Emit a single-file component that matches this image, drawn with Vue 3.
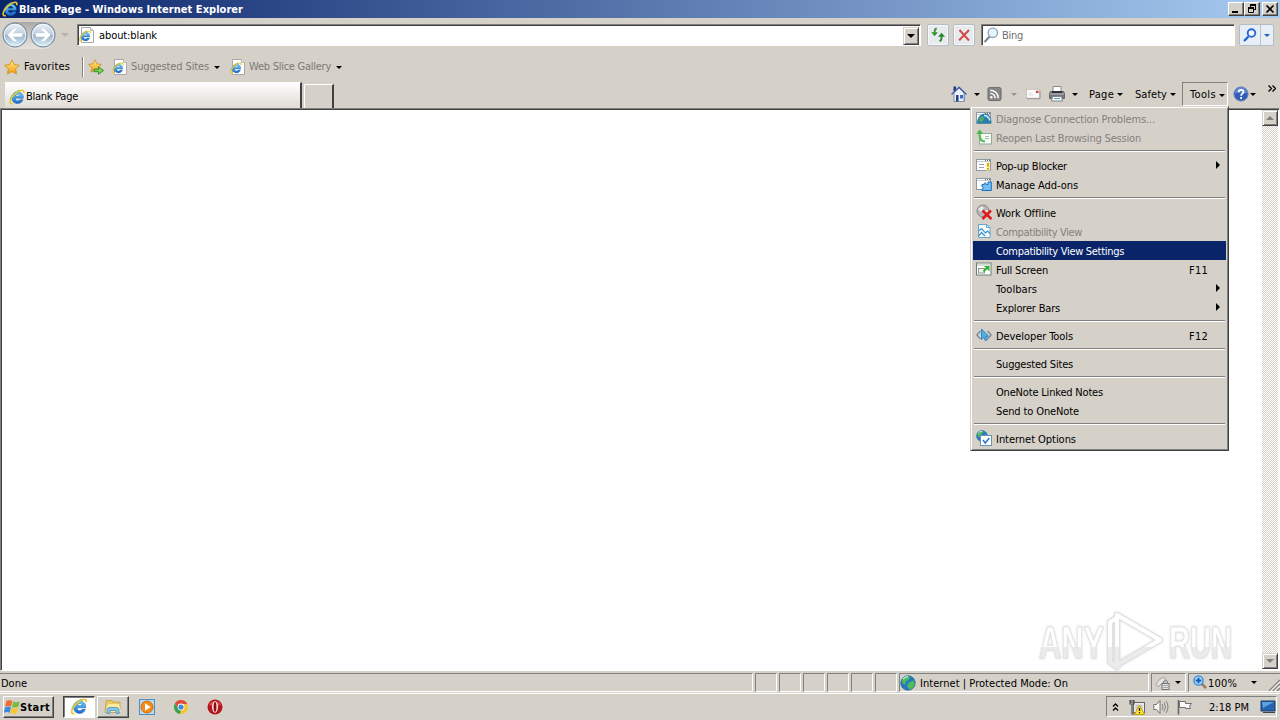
<script setup>
import { ref } from 'vue'

const active = ref('Compatibility View Settings')

const menu = [
  { label: 'Diagnose Connection Problems...', icon: 'diagnose', disabled: true, w: 159 },
  { label: 'Reopen Last Browsing Session', icon: 'reopen', disabled: true, w: 145 },
  { sep: true },
  { label: 'Pop-up Blocker', icon: 'popup', sub: true, w: 71 },
  { label: 'Manage Add-ons', icon: 'addons', w: 82 },
  { sep: true },
  { label: 'Work Offline', icon: 'offline', w: 60 },
  { label: 'Compatibility View', icon: 'compat', disabled: true, w: 86 },
  { label: 'Compatibility View Settings', w: 128 },
  { label: 'Full Screen', icon: 'full', key: 'F11', w: 52 },
  { label: 'Toolbars', sub: true, w: 41 },
  { label: 'Explorer Bars', sub: true, w: 64 },
  { sep: true },
  { label: 'Developer Tools', icon: 'dev', key: 'F12', w: 77 },
  { sep: true },
  { label: 'Suggested Sites', w: 77 },
  { sep: true },
  { label: 'OneNote Linked Notes', w: 107 },
  { label: 'Send to OneNote', w: 83 },
  { sep: true },
  { label: 'Internet Options', icon: 'options', w: 80 },
]

// spreads a label over a fixed width, whatever font is found
const vFit = {
  mounted(el, { value }) {
    const n = el.textContent.length
    const w = el.getBoundingClientRect().width
    el.style.letterSpacing = `${(value - w) / n}px`
  },
}
</script>

<template>
  <svg class="defs" width="0" height="0">
    <defs>
      <linearGradient id="gBlue" x1="0" y1="0" x2="0" y2="1">
        <stop offset="0" stop-color="#6ed2fb" /><stop offset="1" stop-color="#1a66c8" />
      </linearGradient>
      <linearGradient id="gNav" x1="0" y1="0" x2="0" y2="1">
        <stop offset="0" stop-color="#eef3f8" /><stop offset=".48" stop-color="#bccbdc" />
        <stop offset=".52" stop-color="#9fb4cb" /><stop offset="1" stop-color="#dcf4fc" />
      </linearGradient>
      <linearGradient id="gStar" x1="0" y1="0" x2="0" y2="1">
        <stop offset="0" stop-color="#fff08a" /><stop offset="1" stop-color="#f49a10" />
      </linearGradient>
      <linearGradient id="gMark" x1="0" y1="0" x2="0" y2="1">
        <stop offset=".58" stop-color="#fff" /><stop offset=".6" stop-color="#ebebeb" />
      </linearGradient>
      <symbol id="ie" viewBox="0 0 16 16">
        <path d="M14.300 9.200H6.200c.1 1.900 1.100 2.700 2.500 2.700 1 0 1.700-.4 2.100-1.200h3.200c-.8 2.500-2.700 3.800-5.400 3.800-3.500 0-5.600-2.100-5.600-5.500 0-3.500 2.300-5.900 5.800-5.900 3.700 0 5.700 2.300 5.500 6.100zM6.300 7.200h4.700C10.800 5.800 10 5.200 8.700 5.200S6.600 5.800 6.300 7.200z" fill="url(#gBlue)" stroke="#1762b4" stroke-width=".5" />
        <path d="M14.600 4.300c.6-1.700.2-3-1.500-3C9.500 1.300 3.900 5.600 1.900 10.300c-1.400 3.200-.8 5.200 1.900 4.200" fill="none" stroke="#f2c72d" stroke-width="1.600" />
        <path d="M11 1.300C6.500 1.700 2.600 5.700 1.100 10.500" fill="none" stroke="#63b98a" stroke-width=".8" />
      </symbol>
      <symbol id="iepage" viewBox="0 0 16 16">
        <path d="M2.500.5h9l3 3v12h-12z" fill="#fff" stroke="#a8a8a8" />
        <path d="M11.500.5v3h3" fill="#eee" stroke="#b5b5b5" />
        <use href="#ie" x="0" y="3" width="12" height="12" />
      </symbol>
      <symbol id="star" viewBox="0 0 16 16">
        <path d="M8 .8l2.200 4.700 5.200.7-3.800 3.600.9 5.200L8 12.500 3.500 15l.9-5.200L.6 6.200l5.200-.7z" fill="url(#gStar)" stroke="#c98a1a" stroke-width=".8" />
      </symbol>
      <symbol id="staradd" viewBox="0 0 16 16">
        <use href="#star" x="0" y="0" width="14" height="14" />
        <path d="M6 10.300h4.500V7.900L15.500 11.500l-5 3.700V12.700H6z" fill="#7ed65a" stroke="#248522" stroke-width=".9" />
      </symbol>
      <symbol id="arrow" viewBox="0 0 26 26">
        <circle cx="13" cy="13" r="11.900" fill="url(#gNav)" stroke="#7f8fa3" stroke-width="1.200" />
        <circle cx="13" cy="13" r="10.700" fill="none" stroke="#eef5fb" />
        <path d="M5.500 13l6.300-6.300h3.400l-4.500 4.600h9.500v3.400h-9.500l4.500 4.600h-3.400z" fill="#fff" />
      </symbol>
      <symbol id="refresh" viewBox="0 0 16 16">
        <path d="M1.200 5.200h6.800L4.600 9.200z" fill="#3b9436" /><path d="M4.700 6V4q0-2 2-2.500" fill="none" stroke="#3b9436" stroke-width="1.900" />
        <path d="M8 9.800h7L11.500 5.700z" fill="#2b832d" /><path d="M11.500 9v2.500q0 2-2 2.700" fill="none" stroke="#2b832d" stroke-width="1.900" />
      </symbol>
      <symbol id="stop" viewBox="0 0 16 16">
        <path d="M3.500 3l9.500 10.500M13 3L3.200 13.300" stroke="#cf4a4a" stroke-width="2" fill="none" />
      </symbol>
      <symbol id="lens" viewBox="0 0 16 16">
        <path d="M7 9.300L1.500 15" stroke="#78858f" stroke-width="2" />
        <circle cx="9.800" cy="5.800" r="4.700" fill="#e9f5fd" stroke="#8ea2b2" stroke-width="1.300" />
      </symbol>
      <symbol id="lensblue" viewBox="0 0 16 16">
        <path d="M6.500 9.500L2 14" stroke="#1c5fd0" stroke-width="2.200" />
        <circle cx="9.500" cy="6" r="3.800" fill="#f2f8ff" stroke="#2468d8" stroke-width="1.900" />
      </symbol>
      <symbol id="home" viewBox="0 0 16 16">
        <path d="M3 7l5-5 5 5v8.500H3z" fill="#eef1fa" stroke="#6d7da8" stroke-width=".8" />
        <path d="M2.500.5h2.500v4.500H2.500z" fill="#27357f" />
        <path d="M.5 8.500L8 1.300l7.500 7.200" fill="none" stroke="#4660ac" stroke-width="1.500" />
        <path d="M5 9h2.500v6.500H5z" fill="#243c88" /><path d="M9 9h3v3.500H9z" fill="#3b6cc0" />
        <path d="M13.500 8.500v7" stroke="#8290c0" />
      </symbol>
      <symbol id="rss" viewBox="0 0 16 16">
        <rect x="1" y="1" width="14" height="14" rx="2" fill="#858585" stroke="#6b6b6b" />
        <circle cx="4.600" cy="11.500" r="1.300" fill="#fff" />
        <path d="M3.500 7.300a5 5 0 0 1 5.200 5.300M3.500 4a8.500 8.500 0 0 1 8.600 8.600" fill="none" stroke="#fff" stroke-width="1.500" />
      </symbol>
      <symbol id="mail" viewBox="0 0 16 12">
        <rect x=".5" y="1" width="14" height="9.500" fill="#fafafa" stroke="#c4bebc" />
        <path d="M1 11h14V3" stroke="#98908e" fill="none" />
        <path d="M10.500 2.500h3v2.500h-3z" fill="#d24b50" /><path d="M3 7h5M3 5h3" stroke="#d9d9dd" />
      </symbol>
      <symbol id="print" viewBox="0 0 16 16">
        <path d="M4 .5h8v6H4z" fill="#fff" stroke="#8a8a8a" />
        <path d="M1.500 5.500h13l1 2v5H.5v-5z" fill="#73777b" stroke="#55585c" stroke-width=".8" />
        <path d="M1 8h14" stroke="#bfc2c5" /><path d="M3 5h10v2H3z" fill="#303338" />
        <path d="M3.500 10.500h9l1 4.500h-11z" fill="#f5fafc" stroke="#868686" /><path d="M5 12.500h6" stroke="#4fa3c7" />
      </symbol>
      <symbol id="help" viewBox="0 0 16 16">
        <circle cx="8" cy="8" r="7.100" fill="#2f5cbd" stroke="#7286b0" /><path d="M2 7A6 6 0 0 1 14 7" fill="#5f86d6" />
        <path d="M5.600 6.100C5.700 3.100 10.500 3.200 10.500 6c0 1.600-2.400 1.700-2.400 3.700M8.100 11v1.900" fill="none" stroke="#fff" stroke-width="1.800" />
      </symbol>
      <symbol id="globe" viewBox="0 0 16 16">
        <circle cx="8" cy="8" r="7.200" fill="#2379c4" stroke="#28648e" stroke-width=".8" />
        <path d="M2 5c2-3.500 5-4 8-3.500l-1 3-3 2-1 3-2.500-1zM9 7.500l4-2 2 3-2 4.500-4 1.500-2-4z" fill="#4dbb58" />
        <path d="M3 4.200a6 6 0 0 1 5-2.500" stroke="#bdf1ff" stroke-width="1.300" fill="none" />
      </symbol>
      <symbol id="window" viewBox="0 0 16 16">
        <rect x=".5" y="2.500" width="14" height="11" fill="#fff" stroke="#8f9aa0" />
        <path d="M1 4.500h13" stroke="#c4cdd5" /><path d="M9 3.500h1M11 3.500h1M13 3.500h1" stroke="#5d6b75" />
      </symbol>
      <symbol id="diagnose" viewBox="0 0 16 16">
        <use href="#window" width="16" height="16" /><path d="M1 13.500C1 7 5 3.500 9 3.500s6.500 4 6.500 10z" fill="#287fae" />
        <path d="M3 11c0-3 2-5 4-5l1 3-2 3z" fill="#56ae61" /><path d="M8 5.500q4 0 6 5" stroke="#d6f0fb" stroke-width="1.300" fill="none" />
      </symbol>
      <symbol id="reopen" viewBox="0 0 16 16">
        <rect x="3.500" y="4.500" width="12" height="10.500" fill="#f8fcf8" stroke="#9aa69a" /><path d="M9 7.500h4M9 9.500h4" stroke="#9ec5a2" />
        <path d="M9 12.500C4.500 12.500 3.500 9.500 3.700 4" fill="none" stroke="#55bd55" stroke-width="2.200" /><path d="M.3 5L3.500.5 7 4.500z" fill="#48b648" />
      </symbol>
      <symbol id="popup" viewBox="0 0 16 16">
        <use href="#window" width="16" height="16" /><path d="M3 7.500h5M3 10.500h5" stroke="#a2a2a2" />
        <path d="M10 5.500h4v8h-4z" fill="#fff4a5" /><path d="M12 6v3.800M12 11v1.700" stroke="#d98700" stroke-width="1.500" />
      </symbol>
      <symbol id="addons" viewBox="0 0 16 16">
        <use href="#window" width="16" height="16" />
        <path d="M6 8.500h2.300c-.6-2.200 2.300-2.200 1.800 0H12V6h3.300v8.500H6v-1.700c2 .5 2-2.500 0-2z" fill="#74bdf0" stroke="#1871bd" />
      </symbol>
      <symbol id="offline" viewBox="0 0 16 16">
        <circle cx="7" cy="7" r="6" fill="#b5b5b5" stroke="#868686" /><path d="M2 5l4-3 2 2-3 4zM8 7l4-1v4z" fill="#e9e9e9" />
        <path d="M6.500 6.500l9 8.500M15 6.500L6.500 15" stroke="#e01b20" stroke-width="2.600" />
      </symbol>
      <symbol id="compat" viewBox="0 0 16 16">
        <path d="M2.500 1.500h8l3.500 3v10H2.500z" fill="#f4fbff" stroke="#68a5cd" /><path d="M10.500 1.500v3H14" fill="none" stroke="#68a5cd" />
        <path d="M2.500 8l3-2.500 4 4.500 2-2 2.500 2.500M2.500 13l3-3.500 3.500 3.500" fill="none" stroke="#3c93cb" stroke-width="1.200" />
      </symbol>
      <symbol id="full" viewBox="0 0 16 16">
        <rect x=".5" y="2" width="14.500" height="12" fill="#fff" stroke="#6e7f74" /><path d="M1 4h14" stroke="#a9bda9" />
        <rect x="2.500" y="7.500" width="6" height="4.500" fill="#edf1ed" stroke="#8c9c8c" />
        <path d="M7.500 10.500l4-4" stroke="#35b23c" stroke-width="2" /><path d="M8 5h5.500v5.500z" fill="#35b23c" />
      </symbol>
      <symbol id="dev" viewBox="0 0 16 16">
        <path d="M4.500 4L.8 8l3.700 4M11.500 4l3.700 4-3.700 4" fill="none" stroke="#718799" stroke-width="1.200" />
        <path d="M5.500 2v10.500l2.300-2 1.500 3.200 2-1-1.500-3.200 3-.2z" fill="#4cafe8" stroke="#2478b4" stroke-width=".8" />
      </symbol>
      <symbol id="options" viewBox="0 0 16 16">
        <use href="#globe" width="12" height="12" x="0" y="0" /><rect x="4.500" y="5.500" width="11" height="10" fill="#fff" stroke="#6594bc" />
        <path d="M7 10l2.300 3 4-5" fill="none" stroke="#2377c5" stroke-width="1.500" />
      </symbol>
      <symbol id="flag" viewBox="0 0 16 16">
        <path d="M2.500 2C4.500 .8 6.500 1 8.300 2L7 7.500C5 6.500 3.500 6.500 1.200 7.500z" fill="#ed6b2c" />
        <path d="M9.200 2.500c2 1 4 .9 6.500-.3l-1.300 5.500c-2 1-4.500 1-6.500.2z" fill="#77bd42" />
        <path d="M1 8.500c2-1.200 4-1.200 6-.3l-1.300 5.500c-2-1-3.900-.9-6 .3z" fill="#3c8cde" />
        <path d="M7.700 8.700c2 .8 4.500.8 6.500-.3l-1.300 5.500c-2 1.100-4.500 1.100-6.500.2z" fill="#f9c632" />
      </symbol>
      <symbol id="folder" viewBox="0 0 18 16">
        <path d="M2 2h6l1 1.500h7V14H1z" fill="#e7c861" stroke="#bf9b3f" stroke-width=".7" />
        <path d="M4 5.500h11l2 8H1.500z" fill="#faec9e" /><path d="M3 15v-4.500l2-1.500h8l2 1.500V15h-3v-3H6v3H3z" fill="#86c5eb" stroke="#4a96c9" stroke-width=".8" />
      </symbol>
      <symbol id="wmp" viewBox="0 0 16 16">
        <rect x=".5" y=".5" width="15" height="15" fill="#b8dcf5" stroke="#4a90c8" /><circle cx="8" cy="8" r="6" fill="#f38b13" stroke="#d66b08" />
        <path d="M6 4.300v7.400L11.800 8z" fill="#fff" />
      </symbol>
      <symbol id="chrome" viewBox="0 0 16 16">
        <circle cx="8" cy="8" r="7" fill="#f3c82d" /><path d="M2 4.400A7 7 0 0 1 14.200 5H8a3 3 0 0 0-2.600 4.500z" fill="#dd4b3e" />
        <path d="M2 4.400l3.400 5.100A3 3 0 0 0 8 11l-1 4A7 7 0 0 1 2 4.400z" fill="#34a15a" />
        <circle cx="8" cy="8" r="3.400" fill="#fff" /><circle cx="8" cy="8" r="2.600" fill="#4285db" />
      </symbol>
      <symbol id="opera" viewBox="0 0 16 16">
        <circle cx="8" cy="8" r="7.500" fill="#b5141b" /><path d="M2 6a6.500 6 0 0 1 12 0C11 7 5 7 2 6z" fill="#d8484c" />
        <ellipse cx="8" cy="8" rx="2.900" ry="5.800" fill="#fff" /><ellipse cx="8" cy="8" rx="1.500" ry="4.900" fill="#96090f" />
      </symbol>
      <symbol id="net" viewBox="0 0 16 16">
        <rect x="4.500" y="3.500" width="11" height="10" fill="#eee" stroke="#666" /><rect x="6.500" y="5.500" width="7" height="6" fill="#c7c7c7" />
        <path d="M1 1v4h4V1M3 5v10h4M2 1v3M4 1v3" fill="none" stroke="#555" stroke-width="1.200" />
        <path d="M10.500 6.500l5 9h-10z" fill="#ffe338" stroke="#c4a100" /><path d="M10.500 9v3M10.500 13v1.300" stroke="#222" stroke-width="1.300" />
      </symbol>
      <symbol id="sound" viewBox="0 0 16 16">
        <path d="M.8 5.500h2.700L7 1.500v13l-3.500-4H.8z" fill="#f8f8f8" stroke="#747474" />
        <path d="M9 5q2 3 0 6M11 3.500q3 4.500 0 9M13 2q4 6 0 12" fill="none" stroke="#858585" />
      </symbol>
      <symbol id="action" viewBox="0 0 16 16">
        <path d="M1.500 1v14.500" stroke="#666" stroke-width="1.600" />
        <path d="M2.500 2.500h6v2h6l-2 2.500 1 2.500h-5V8.500h-6z" fill="#fafafa" stroke="#707070" />
      </symbol>
      <symbol id="lock" viewBox="0 0 16 16">
        <path d="M1 9l4-5 4-2 2 4-5 3-3 3z" fill="#e4e4e4" stroke="#999" stroke-width=".8" />
        <path d="M8.500 9V6.500q2-2.500 4 0V9" stroke="#777" fill="none" /><rect x="7" y="8.500" width="7" height="6" fill="#e1e1e1" stroke="#777" /><path d="M8 10.500h5M8 12.500h5" stroke="#aaa" />
      </symbol>
      <symbol id="zoomin" viewBox="0 0 16 16">
        <path d="M8 8l5 5" stroke="#9c8058" stroke-width="2.500" /><circle cx="5.500" cy="5.500" r="4.600" fill="#a8d4fa" stroke="#348ddd" stroke-width="1.400" />
        <path d="M5.500 2.700v5.600M2.700 5.500h5.600" stroke="#1259b2" stroke-width="1.800" />
      </symbol>
      <symbol id="desk" viewBox="0 0 16 14">
        <path d="M1 1h14v10H1z" fill="#2464b1" stroke="#193b6b" /><path d="M2 2h12L3 8z" fill="#5ca2de" /><path d="M3 12.500h12" stroke="#3e4550" />
      </symbol>
    </defs>
  </svg>

  <div class="screen">
    <header class="titlebar">
      <svg class="ic"><use href="#ie" /></svg>
      <b v-fit="224">Blank Page - Windows Internet Explorer</b>
      <div class="winbtns">
        <span class="wb"><svg viewBox="0 0 14 12"><path d="M3 9h6" stroke="#000" stroke-width="2" /></svg></span>
        <span class="wb"><svg viewBox="0 0 14 12"><path d="M5 1.500h6M5 2.500h6M5.500 2v2M10.500 2v5M9 6.500h2M3 4.500h6M3 5.500h6M3.500 5v4.500h5V5" stroke="#000" fill="none" /></svg></span>
        <span class="wb close"><svg viewBox="0 0 14 12"><path d="M3.500 2.500l7 7M10.500 2.500l-7 7" stroke="#000" stroke-width="1.700" /></svg></span>
      </div>
    </header>

    <div class="navrow">
      <div class="navbtns">
        <svg><use href="#arrow" /></svg>
        <svg class="flip"><use href="#arrow" /></svg>
      </div>
      <i class="tri pale"></i>
      <div class="address">
        <svg class="ic"><use href="#iepage" /></svg>
        <span v-fit="58" class="low">about:blank</span>
        <span class="combo"><i class="tri"></i></span>
      </div>
      <span class="navicon"><svg class="ic"><use href="#refresh" /></svg></span>
      <span class="navicon x"><svg class="ic"><use href="#stop" /></svg></span>
      <div class="search">
        <svg class="ic"><use href="#lens" /></svg>
        <span v-fit="21" class="low">Bing</span>
      </div>
      <div class="go">
        <span><svg class="ic"><use href="#lensblue" /></svg></span>
        <span class="drop"><i class="tri blue"></i></span>
      </div>
    </div>

    <div class="favrow">
      <svg class="ic"><use href="#star" /></svg>
      <span v-fit="46" class="favs">Favorites</span>
      <i class="vline"></i>
      <svg class="ic"><use href="#staradd" /></svg>
      <svg class="ic page1"><use href="#iepage" /></svg>
      <span v-fit="78" class="grey">Suggested Sites</span><i class="tri"></i>
      <svg class="ic page2"><use href="#iepage" /></svg>
      <span v-fit="82" class="grey">Web Slice Gallery</span><i class="tri"></i>
    </div>

    <div class="tabrow">
      <div class="tab"><svg class="ic"><use href="#ie" /></svg><span v-fit="52">Blank Page</span></div>
      <div class="newtab"></div>
      <div class="commands">
        <svg class="ic"><use href="#home" /></svg><i class="tri t1"></i>
        <svg class="ic rss"><use href="#rss" /></svg><i class="tri dim"></i>
        <svg class="mail"><use href="#mail" /></svg>
        <svg class="ic print"><use href="#print" /></svg><i class="tri t2"></i>
        <span v-fit="25" class="page">Page</span><i class="tri t3"></i>
        <span v-fit="32" class="safety">Safety</span><i class="tri t3"></i>
        <div class="tools"><span v-fit="26">Tools</span><i class="tri t3"></i></div>
        <svg class="ic help"><use href="#help" /></svg><i class="tri t4"></i>
        <svg class="chev" viewBox="0 0 8 7"><path d="M.5.5l3 3-3 3M4.500.5l3 3-3 3" fill="none" stroke="#000" stroke-width="1.300" /></svg>
      </div>
    </div>

    <main class="view">
      <div class="scroll">
        <span class="sb"><i class="up"></i></span>
        <span class="sb"><i class="tri down"></i></span>
      </div>
      <svg class="mark" width="212" height="66" viewBox="0 0 212 66">
        <g fill="url(#gMark)" stroke="#e4e4e4" stroke-width="1">
          <text x="3" y="49" textLength="65" lengthAdjust="spacingAndGlyphs">ANY</text>
          <text x="133" y="49" textLength="63" lengthAdjust="spacingAndGlyphs">RUN</text>
        </g>
        <g fill="none" stroke-linejoin="round">
          <path d="M81 6l43 25-43 25zM81 9l-7 4v40l9 7" stroke="#e0e0e0" stroke-width="6" />
          <path d="M81 6l43 25-43 25zM81 9l-7 4v40l9 7" stroke="url(#gMark)" stroke-width="4" />
        </g>
      </svg>
    </main>

    <footer class="status">
      <div class="pane done"><span v-fit="26" class="low">Done</span></div>
      <div v-for="n in 6" :key="n" class="pane small"></div>
      <div class="pane zone"><svg class="ic"><use href="#globe" /></svg><span v-fit="148" class="low">Internet | Protected Mode: On</span></div>
      <div class="pane lock"><svg class="ic"><use href="#lock" /></svg><i class="tri"></i></div>
      <div class="pane zoom"><svg class="ic"><use href="#zoomin" /></svg><span v-fit="29" class="low">100%</span><i class="tri"></i>
        <svg class="grip" viewBox="0 0 12 12"><path d="M1 12L12 1M5 12l7-7M9 12l3-3" stroke="#808080" stroke-width="1.500" /><path d="M2.500 12L12 2.500M6.500 12L12 6.500" stroke="#fff" /></svg>
      </div>
    </footer>

    <div class="taskbar">
      <div class="start"><svg><use href="#flag" /></svg><b v-fit="30" class="low">Start</b></div>
      <div class="task on"><svg class="big"><use href="#ie" /></svg></div>
      <div class="task"><svg class="big"><use href="#folder" /></svg></div>
      <svg class="ic q1"><use href="#wmp" /></svg>
      <svg class="ic q2"><use href="#chrome" /></svg>
      <svg class="ic q2"><use href="#opera" /></svg>
      <div class="tray">
        <svg class="more" viewBox="0 0 7 8"><path d="M1 3.500L3.500 1 6 3.500M1 7.500L3.500 5 6 7.500" fill="none" stroke="#000" stroke-width="1.300" /></svg>
        <svg class="ic"><use href="#net" /></svg>
        <svg class="ic"><use href="#sound" /></svg>
        <svg class="ic"><use href="#action" /></svg>
        <span v-fit="40" class="clock low">2:18 PM</span>
        <svg class="ic"><use href="#desk" /></svg>
      </div>
    </div>

    <div class="menu">
      <template v-for="(m, i) in menu" :key="i">
        <hr v-if="m.sep" />
        <div
          v-else
          class="item"
          :class="{ disabled: m.disabled, active: m.label === active }"
          @mouseenter="active = m.label"
        >
          <span class="slot"><svg v-if="m.icon" class="ic"><use :href="'#' + m.icon" /></svg></span>
          <span v-fit="m.w" class="low">{{ m.label }}</span>
          <span v-if="m.key" class="key low"><span v-fit="19">{{ m.key }}</span></span>
          <i v-if="m.sub" class="sub"></i>
        </div>
      </template>
    </div>
  </div>
</template>

<style>
body {
  margin: 0;
  overflow: hidden;
}
</style>

<style scoped>
.defs {
  position: absolute;
}

.screen {
  position: relative;
  display: flex;
  flex-direction: column;
  width: 1280px;
  height: 720px;
  overflow: hidden;
  background: #d5d0c8;
  color: #000;
  font: 11px/14px 'DejaVu Sans Condensed', 'DejaVu Sans', sans-serif;
  white-space: nowrap;
  cursor: default;
}

.screen * {
  box-sizing: border-box;
}

svg,
i {
  flex: none;
  display: block;
}

.ic {
  width: 16px;
  height: 16px;
}

.low {
  padding-top: 2px;
}

.tri {
  width: 0;
  height: 0;
  border: 3px solid transparent;
  border-top-color: #000;
  border-bottom: 0;
}

.titlebar {
  display: flex;
  align-items: center;
  height: 18px;
  padding: 0 2px 0 2px;
  color: #fff;
  background: linear-gradient(90deg, #0a246a, #a6caf0);
}

.titlebar b {
  margin-left: 1px;
  padding-top: 1px;
}

.winbtns {
  display: flex;
  margin-left: auto;
}

.wb {
  width: 16px;
  height: 14px;
  background: #d5d0c8;
  border: 1px solid;
  border-color: #fff #404040 #404040 #fff;
  box-shadow: inset -1px -1px #808080;
}

.wb svg {
  width: 14px;
  height: 12px;
}

.wb.close {
  margin-left: 2px;
}

.navrow {
  display: flex;
  align-items: center;
  height: 34px;
  padding-left: 2px;
}

.navbtns {
  display: flex;
  gap: 2px;
  height: 27px;
  border-radius: 14px;
  background: linear-gradient(#aba7a6, #c9c5c0 40%, #e6e3df);
}

.navbtns svg {
  width: 26px;
  height: 26px;
}

.flip {
  transform: scaleX(-1);
}

.pale {
  margin: 0 9px 0 5px;
  border-width: 4px 4px 0;
  border-top-color: #b6b1aa;
}

.address,
.search {
  display: flex;
  align-items: center;
  height: 22px;
  background: #fff;
  border: 1px solid;
  border-color: #808080 #fff #fff #808080;
  box-shadow: inset 1px 1px #404040;
}

.address {
  width: 844px;
  padding: 0 1px;
  margin-left: -1px;
}

.address .ic {
  margin-right: 4px;
}

.combo {
  display: flex;
  align-items: center;
  justify-content: center;
  width: 16px;
  height: 18px;
  margin: 1px 0 0 auto;
  background: #d5d0c8;
  border: 1px solid;
  border-color: #d5d0c8 #404040 #404040 #d5d0c8;
  box-shadow: inset 1px 1px #fff, inset -1px -1px #808080;
}

.combo .tri {
  border-width: 4px 4px 0;
}

.navicon {
  display: grid;
  place-items: center;
  width: 22px;
  height: 22px;
  margin-left: 6px;
  border: 1px solid #b3bdc7;
  border-radius: 2px;
  background: #e8ebee;
  box-shadow: inset 0 0 0 1px #f6f8fa;
}

.navicon.x {
  margin-left: 4px;
}

.search {
  width: 254px;
  margin-left: 6px;
  padding-left: 1px;
  color: #707070;
}

.search .ic {
  margin-right: 3px;
}

.go {
  display: flex;
  width: 35px;
  height: 22px;
  margin-left: 4px;
  border: 1px solid #b3bdc7;
  border-radius: 2px;
  background: #e8eef5;
}

.go span {
  display: grid;
  place-items: center;
  width: 21px;
}

.go .drop {
  width: 13px;
  border-left: 1px solid #b9c3ce;
}

.blue {
  border-top-color: #2560bc;
}

.favrow {
  display: flex;
  align-items: center;
  height: 30px;
  padding-left: 4px;
}

.favs {
  margin-left: 4px;
}

.vline {
  width: 2px;
  height: 20px;
  margin: 0 4px 0 12px;
  border-left: 1px solid #808080;
  border-right: 1px solid #fff;
}

.page1 {
  margin: 0 3px 0 8px;
}

.page2 {
  margin: 0 3px 0 10px;
}

.grey {
  color: #7d7974;
}

.favrow .tri {
  margin-left: 5px;
}

.tabrow {
  display: flex;
  height: 26px;
}

.tab {
  display: flex;
  align-items: center;
  width: 297px;
  margin-left: 5px;
  padding: 2px 0 0 4px;
  background: linear-gradient(#fff, #f0eeeb 45%, #dfdbd5);
  border-right: 2px solid #404040;
  border-top: 1px solid #fff;
}

.tab span {
  margin-left: 1px;
  padding-top: 1px;
}

.newtab {
  width: 30px;
  margin: 2px 0 0 2px;
  border: 1px solid #fff;
  border-right: 2px solid #404040;
  border-bottom: 0;
}

.commands {
  display: flex;
  align-items: center;
  height: 24px;
  margin-left: 617px;
}

.commands > span {
  padding-top: 1px;
}

.t1 {
  margin: 0 7px 0 7px;
}

.rss {
  width: 15px;
}

.dim {
  border-top-color: #9b9690;
  margin: 0 9px 0 9px;
}

.mail {
  width: 15px;
  height: 12px;
}

.print {
  margin-left: 8px;
}

.t2 {
  margin: 0 11px 0 7px;
}

.t3 {
  margin-left: 3px;
}

.safety {
  margin-left: 12px;
}

.tools {
  display: flex;
  align-items: center;
  width: 46px;
  height: 24px;
  margin: 0 5px 0 6px;
  padding: 2px 0 0 7px;
  border: 1px solid;
  border-color: #808080 #fff #fff #808080;
}

.t4 {
  margin-left: 1px;
}

.chev {
  width: 8px;
  height: 7px;
  margin: -12px 0 0 12px;
}

.view {
  position: relative;
  flex: none;
  display: flex;
  justify-content: flex-end;
  height: 563px;
  background: #fff;
  border: 1px solid;
  border-color: #808080 #fff #fff #808080;
  box-shadow: inset 1px 1px #404040;
  padding: 1px;
}

.scroll {
  display: flex;
  flex-direction: column;
  justify-content: space-between;
  width: 16px;
  background: repeating-conic-gradient(#d5d0c8 0 25%, #fff 0 50%) 0 0 / 2px 2px;
}

.sb {
  display: grid;
  place-items: center;
  height: 16px;
  background: #d5d0c8;
  border: 1px solid;
  border-color: #d5d0c8 #404040 #404040 #d5d0c8;
  box-shadow: inset 1px 1px #fff, inset -1px -1px #808080;
}

.sb .tri {
  border-width: 4px 4px 0;
  border-top-color: #808080;
}

.up {
  border: 4px solid transparent;
  border-top: 0;
  border-bottom-color: #808080;
}

.mark {
  position: absolute;
  left: 1035px;
  top: 500px;
  overflow: visible;
  filter: drop-shadow(0 0 1px #d4d4d4);
}

.mark text {
  font: bold 44px 'Liberation Sans', sans-serif;
}

.status {
  display: flex;
  align-items: center;
  gap: 2px;
  height: 22px;
  padding-top: 1px;
}

.pane {
  display: flex;
  align-items: center;
  height: 19px;
  border: 1px solid;
  border-color: #808080 #fff #fff #808080;
}

.done {
  width: 753px;
  border-left: 0;
  padding-left: 1px;
}

.small {
  width: 22px;
}

.zone {
  width: 250px;
}

.zone .ic {
  margin-right: 4px;
}

.pane.lock {
  width: 35px;
  padding-left: 3px;
}

.pane .tri {
  margin-left: 4px;
}

.pane.zoom {
  flex: 1;
  border-right: 0;
  padding-left: 4px;
}

.zoom .ic {
  margin-right: -1px;
}

.pane.zoom .tri {
  margin-left: 14px;
}

.grip {
  width: 12px;
  height: 12px;
  margin: 5px 0 0 auto;
}

.taskbar {
  display: flex;
  align-items: center;
  flex: 1;
  padding: 0 3px 1px;
  border-top: 1px solid #fff;
}

.start,
.task {
  display: flex;
  align-items: center;
  height: 22px;
  border: 1px solid;
  border-color: #fff #404040 #404040 #fff;
  box-shadow: inset -1px -1px #808080;
}

.start {
  width: 51px;
}

.start svg {
  width: 16px;
  height: 16px;
}

.task {
  justify-content: center;
  width: 32px;
}

.task.on {
  margin: 0 2px 0 9px;
  background: #fff;
  border-color: #404040 #fff #fff #404040;
  box-shadow: inset 1px 1px #808080;
}

.big {
  width: 18px;
  height: 17px;
}

.q1 {
  margin-left: 10px;
}

.q2 {
  margin-left: 18px;
}

.tray {
  display: flex;
  align-items: center;
  width: 171px;
  height: 21px;
  margin-left: auto;
  padding-left: 5px;
  border: 1px solid;
  border-color: #808080 #fff #fff #808080;
}

.more {
  width: 7px;
  height: 8px;
  margin-right: 2px;
}

.tray .ic {
  margin-left: 8px;
}

.tray .clock {
  margin: 0 3px 0 16px;
}

.menu {
  position: absolute;
  left: 970px;
  top: 106px;
  width: 259px;
  height: 345px;
  padding: 1px;
  background: #d5d0c8;
  border: 1px solid;
  border-color: #d5d0c8 #404040 #404040 #d5d0c8;
  box-shadow: inset 1px 1px #fff, inset -1px -1px #808080;
}

.menu hr {
  height: 2px;
  margin: 3px 2px 4px;
  border: 0;
  border-top: 1px solid #808080;
  border-bottom: 1px solid #fff;
}

.item {
  display: flex;
  align-items: center;
  height: 19px;
  margin: 0 1px;
  padding: 0 6px 0 3px;
}

.item:first-child {
  margin-top: 1px;
}

.item.disabled {
  color: #85817c;
}

.item.active {
  background: #0a246a;
  color: #fff;
}

.slot {
  width: 20px;
  padding-bottom: 2px;
}

.key {
  margin: 0 12px 0 auto;
}

.sub {
  margin: -1px 0 0 auto;
  border: 4px solid transparent;
  border-left-color: #000;
  border-right: 0;
}
</style>
